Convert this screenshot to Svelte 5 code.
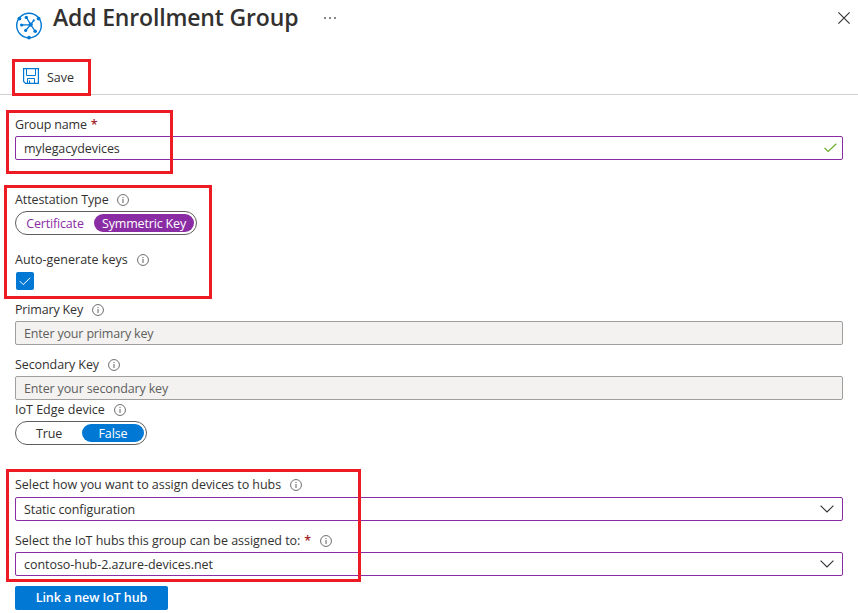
{#snippet info()}
  <svg class="info" width="12" height="12" viewBox="0 0 12 12" fill="none">
    <circle cx="6" cy="6" r="5.45" stroke="#605e5c" stroke-width="0.9" />
    <path d="M6 5v4" stroke="#605e5c" />
    <path d="M6 3v1.1" stroke="#605e5c" />
  </svg>
{/snippet}

{#snippet chevron()}
  <svg width="14" height="8" viewBox="0 0 14 8" fill="none">
    <path d="M0.6 0.7 7 7 13.4 0.7" stroke="#323130" stroke-width="1.1" />
  </svg>
{/snippet}

<main>
  <header>
    <svg class="logo" width="28" height="29" viewBox="0 0 28 29" fill="none" stroke="#0078d4">
      <circle cx="14" cy="14.5" r="12.3" stroke-width="1.4" />
      <g stroke-width="1.3">
        <path d="M15.7 13.6 11.5 6.5M15.7 13.6 18.6 9.6M15.7 13.6 6.5 14M15.7 13.6 10.8 19.2M15.7 13.6 20 20" />
      </g>
      <g fill="#0078d4" stroke="none">
        <circle cx="15.7" cy="13.6" r="2.1" />
        <circle cx="11.3" cy="6.4" r="1.7" />
        <circle cx="18.8" cy="9.4" r="1.1" />
        <circle cx="6.6" cy="14" r="1.6" />
        <circle cx="10.7" cy="19.4" r="1.6" />
        <circle cx="20.2" cy="20.2" r="1.8" />
        <circle cx="4.4" cy="7.6" r="1.9" />
        <circle cx="23.6" cy="7.6" r="1.9" />
        <circle cx="14" cy="26.6" r="1.9" />
      </g>
    </svg>
    <h1>Add Enrollment Group</h1>
    <span class="more"><i></i><i></i><i></i></span>
    <svg class="close" width="12" height="12" viewBox="0 0 12 12" fill="none">
      <path d="M0.4 0.4 11.6 11.6M11.6 0.4 0.4 11.6" stroke="#323130" stroke-width="1.1" />
    </svg>
  </header>

  <div class="toolbar">
    <svg width="16" height="16" viewBox="0 0 16 16" fill="none" stroke="#0078d4">
      <path d="M0.6 0.6H15.4V15.4H2.6L0.6 13.4Z" stroke-width="1.2" />
      <path d="M3.5 1V7.5H12.5V1" />
      <path d="M4.5 15V10.5H11.5V15M6.5 12.5V15" />
    </svg>
    <span>Save</span>
  </div>

  <form>
    <div class="label"><span class="tight">Group name</span><b>*</b></div>
    <div class="field valid">
      <span class="snug">mylegacydevices</span>
      <svg width="13" height="10" viewBox="0 0 13 10" fill="none">
        <path d="M0.6 5 4.2 8.5 12.3 0.8" stroke="#6bb02a" stroke-width="1.2" />
      </svg>
    </div>

    <div class="label attest"><span class="snug">Attestation Type</span>{@render info()}</div>
    <div class="toggle keytype">
      <span class="off"><span class="tight">Certificate</span></span>
      <span class="on"><span class="tight">Symmetric Key</span></span>
    </div>

    <div class="label auto"><span>Auto-generate keys</span>{@render info()}</div>
    <div class="check">
      <svg width="12" height="9" viewBox="0 0 12 9" fill="none">
        <path d="M0.8 4.2 4.2 7.6 11.2 0.8" stroke="#fff" />
      </svg>
    </div>

    <div class="label primary"><span class="tight">Primary Key</span>{@render info()}</div>
    <div class="field disabled"><span class="tight">Enter your primary key</span></div>

    <div class="label secondary"><span class="snug">Secondary Key</span>{@render info()}</div>
    <div class="field disabled"><span class="long">Enter your secondary key</span></div>

    <div class="label edge"><span>IoT Edge device</span>{@render info()}</div>
    <div class="toggle edgetype">
      <span class="off"><span class="tight">True</span></span>
      <span class="on"><span class="snug">False</span></span>
    </div>

    <div class="label assign"><span class="long">Select how you want to assign devices to hubs</span>{@render info()}</div>
    <div class="field"><span class="snug">Static configuration</span>{@render chevron()}</div>

    <div class="label hubs"><span class="long">Select the IoT hubs this group can be assigned to:</span><b>*</b>{@render info()}</div>
    <div class="field"><span class="long">contoso-hub-2.azure-devices.net</span>{@render chevron()}</div>

    <button type="button"><span class="snug">Link a new IoT hub</span></button>
  </form>

  <div class="mark mark-save"></div>
  <div class="mark mark-name"></div>
  <div class="mark mark-keys"></div>
  <div class="mark mark-hubs"></div>
</main>

<style>
  :global(body) { margin: 0; background: #fff; }
  main {
    position: relative;
    box-sizing: border-box;
    width: 858px;
    height: 613px;
    overflow: hidden;
    background: #fff;
    color: #323130;
    font: 12.5px/18px "Open Sans", "Noto Sans", sans-serif;
    white-space: nowrap;
  }
  svg { display: block; flex: none; }
  .tight { letter-spacing: -0.17px; }
  .snug { letter-spacing: -0.09px; }
  .long { letter-spacing: -0.04px; }
  .disabled .long { letter-spacing: -0.14px; }
  header { display: flex; height: 54px; padding: 0 8px 0 15px; align-items: flex-start; }
  .logo { margin-top: 11px; }
  h1 { margin: 0 0 0 10px; width: 245px; font-size: 23px; line-height: 34px; font-weight: 600; letter-spacing: -0.16px; }
  .more { display: flex; gap: 3px; margin: 17px 0 0 26px; }
  .more i { width: 2px; height: 2px; background: #8a8886; }
  .close { margin: 12px 0 0 auto; }
  .toolbar { display: flex; align-items: center; box-sizing: border-box; height: 41px; padding: 7px 0 0 23px; border-bottom: 1px solid #d2d0ce; }
  .toolbar svg { margin: -4px 8px 0 0; }
  form { padding: 21px 15px 0; }
  .label { display: flex; align-items: center; height: 18px; margin-bottom: 2px; }
  .label b { margin-left: 4px; color: #a4262c; font-weight: 600; }
  .info { margin: 0 0 1px 9px; }
  .attest .info { margin-left: 8px; }
  .field { display: flex; align-items: center; justify-content: space-between; box-sizing: border-box; height: 24px; padding: 0 8px; border: 1px solid #8a2da5; border-radius: 2px; background: #fff; }
  .field > span { padding-top: 2px; }
  .valid { padding-right: 5px; }
  .disabled { border-color: #a19f9d; background: #f3f2f1; color: #605e5c; }
  .attest { margin-top: 31px; }
  .auto { margin-top: 16px; }
  .primary { margin-top: 11px; }
  .secondary { margin-top: 11px; }
  .edge { margin-top: 1px; margin-bottom: 2px; }
  .assign { margin-top: 31px; margin-bottom: 3px; }
  .hubs { margin-top: 11px; }
  .toggle { display: flex; box-sizing: border-box; height: 24px; padding: 2px; border: 1px solid #605e5c; border-radius: 12px; }
  .toggle > span { display: flex; align-items: center; justify-content: center; border-radius: 10px; }
  .toggle > span > span { padding-top: 1px; }
  .toggle > .off > span { padding-right: 2px; }
  .keytype { width: 182px; }
  .keytype .off { width: 76px; color: #8a2da5; }
  .keytype .on { width: 100px; background: #8a2da5; color: #fff; }
  .edgetype { width: 132px; }
  .edgetype .off { width: 64px; }
  .edgetype .on { width: 62px; background: #0078d4; color: #fff; }
  .check { display: flex; align-items: center; justify-content: center; width: 18px; height: 18px; margin: 3px 0 0 1px; border-radius: 2px; background: #0078d4; }
  button { display: flex; align-items: center; justify-content: center; width: 153px; height: 24px; margin-top: 10px; padding: 0; border: 0; border-radius: 2px; background: #0078d4; color: #fff; font: 600 12.5px/18px "Open Sans", sans-serif; }
  .mark { position: absolute; box-sizing: border-box; border: 3px solid #ed1c24; pointer-events: none; }
  .mark-save { left: 12px; top: 59px; width: 79px; height: 37px; }
  .mark-name { left: 6px; top: 110px; width: 167px; height: 64px; }
  .mark-keys { left: 4px; top: 185px; width: 208px; height: 114px; }
  .mark-hubs { left: 6px; top: 469px; width: 355px; height: 113px; }
</style>
